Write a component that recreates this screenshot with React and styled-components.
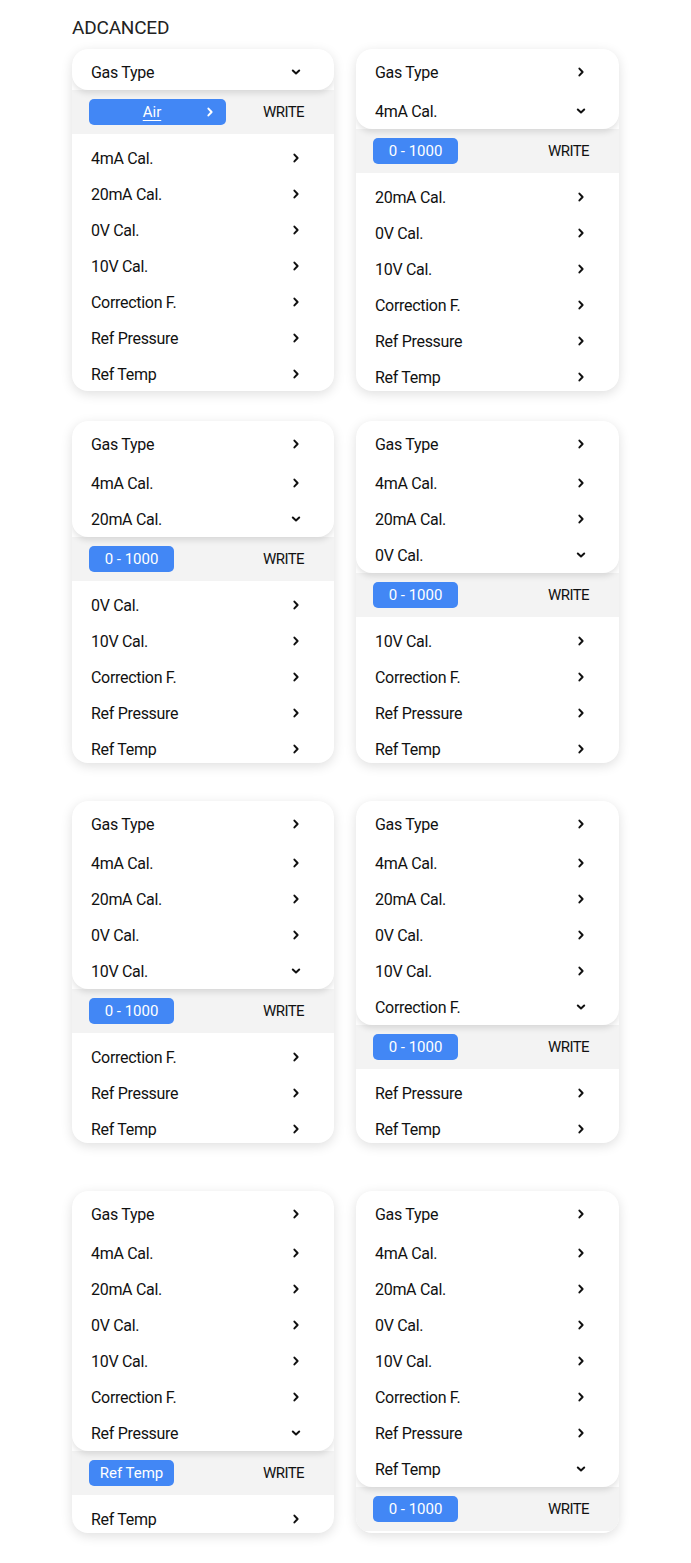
import React from 'react';
import styled, { createGlobalStyle } from 'styled-components';

const GlobalStyle = createGlobalStyle`
  html, body { margin: 0; padding: 0; background: #ffffff; }
  body { font-family: Roboto, "Liberation Sans", Arial, sans-serif; color: #111111; }
`;

const Page = styled.div`
  width: 691px;
  min-height: 1563px;
  box-sizing: border-box;
  padding: 17px 0 0 72px;
`;

const Title = styled.h1`
  margin: 0 0 10px;
  font-size: 19px;
  line-height: 22px;
  font-weight: 400;
  color: #222222;
  letter-spacing: -0.2px;
`;

const Grid = styled.div`
  display: grid;
  grid-template-columns: 262px 263px;
  column-gap: 22px;
  margin-top: ${(p) => p.$gap}px;
`;

const Card = styled.div`
  height: 342px;
  border-radius: 16px;
  background: #ffffff;
  box-shadow: 0 3px 12px rgba(0, 0, 0, 0.13);
  overflow: hidden;
  display: flex;
  flex-direction: column;
  & > * { flex-shrink: 0; }
`;

const TopSection = styled.div`
  position: relative;
  z-index: 1;
  background: #ffffff;
  border-radius: 16px;
  box-shadow: 0 3px 6px rgba(0, 0, 0, 0.12);
  padding-top: 5px;
  & > :nth-child(2) { margin-top: 3px; }
`;

const BottomSection = styled.div`
  padding-top: 6px;
`;

const Row = styled.div`
  display: flex;
  align-items: center;
  justify-content: space-between;
  height: 36px;
  padding: 0 33px 0 19px;
  font-size: 16px;
  letter-spacing: -0.3px;
  color: #111111;
`;

const EditStrip = styled.div`
  display: flex;
  align-items: center;
  justify-content: space-between;
  height: 44px;
  background: #f3f3f3;
  padding: 0 30px 0 17px;
`;

const Pill = styled.div`
  width: ${(p) => (p.$wide ? 137 : 85)}px;
  height: 26px;
  box-sizing: border-box;
  border-radius: 5px;
  background: #4287f5;
  color: #ffffff;
  font-size: 15px;
  display: grid;
  grid-template-columns: ${(p) => (p.$wide ? '1fr auto 1fr' : '1fr')};
  align-items: center;
  justify-items: center;
  padding-right: ${(p) => (p.$wide ? 11 : 0)}px;
`;

const PillText = styled.span`
  text-decoration: ${(p) => (p.$underline ? 'underline' : 'none')};
  text-underline-offset: 3px;
  text-decoration-thickness: 1px;
`;

const PillIcon = styled.span`
  justify-self: end;
  display: flex;
`;

const WriteLabel = styled.span`
  font-size: 15px;
  letter-spacing: -0.6px;
  color: #111111;
`;

const IconBox = styled.svg`
  width: 10px;
  height: 10px;
  display: block;
`;

const ChevronRight = ({ color = '#111' }) => (
  <IconBox viewBox="0 0 10 10">
    <polyline points="3.4,1.6 6.6,5 3.4,8.4" fill="none" stroke={color} strokeWidth="2" strokeLinecap="round" strokeLinejoin="round" />
  </IconBox>
);

const ChevronDown = () => (
  <IconBox viewBox="0 0 10 10">
    <polyline points="1.8,3.5 5,6.5 8.2,3.5" fill="none" stroke="#111" strokeWidth="2" strokeLinecap="round" strokeLinejoin="round" />
  </IconBox>
);

const ITEMS = [
  'Gas Type',
  '4mA Cal.',
  '20mA Cal.',
  '0V Cal.',
  '10V Cal.',
  'Correction F.',
  'Ref Pressure',
  'Ref Temp',
];

const SettingsCard = ({ open, value, wide }) => {
  const before = ITEMS.slice(0, open + 1);
  const after = ITEMS.slice(open + 1);
  return (
    <Card>
      <TopSection>
        {before.map((label, i) => (
          <Row key={label}>
            <span>{label}</span>
            {i === open ? <ChevronDown /> : <ChevronRight />}
          </Row>
        ))}
      </TopSection>
      <EditStrip>
        <Pill $wide={wide}>
          {wide && <span />}
          <PillText $underline={wide}>{value}</PillText>
          {wide && (
            <PillIcon>
              <ChevronRight color="#fff" />
            </PillIcon>
          )}
        </Pill>
        <WriteLabel>WRITE</WriteLabel>
      </EditStrip>
      {after.length > 0 && (
        <BottomSection>
          {after.map((label) => (
            <Row key={label}>
              <span>{label}</span>
              <ChevronRight />
            </Row>
          ))}
        </BottomSection>
      )}
    </Card>
  );
};

const ROWS = [
  { gap: 0, cards: [{ open: 0, value: 'Air', wide: true }, { open: 1, value: '0 - 1000' }] },
  { gap: 30, cards: [{ open: 2, value: '0 - 1000' }, { open: 3, value: '0 - 1000' }] },
  { gap: 38, cards: [{ open: 4, value: '0 - 1000' }, { open: 5, value: '0 - 1000' }] },
  { gap: 48, cards: [{ open: 6, value: 'Ref Temp' }, { open: 7, value: '0 - 1000' }] },
];

export default function App() {
  return (
    <>
      <GlobalStyle />
      <Page>
        <Title>ADCANCED</Title>
        {ROWS.map((row, i) => (
          <Grid key={i} $gap={row.gap}>
            {row.cards.map((c) => (
              <SettingsCard key={c.open} {...c} />
            ))}
          </Grid>
        ))}
      </Page>
    </>
  );
}
